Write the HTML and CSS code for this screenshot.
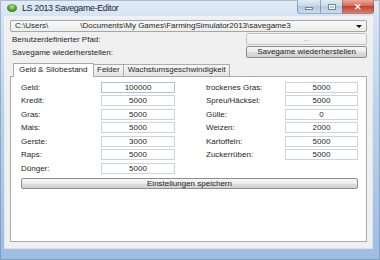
FILE: index.html
```html
<!DOCTYPE html>
<html lang="de">
<head>
  <meta charset="UTF-8" />
  <title>LS 2013 Savegame-Editor</title>
  <link rel="stylesheet" href="styles.css">
</head>
<body>
  <div class="window">
    <div class="titlebar">
      <span class="app-icon"></span>
      <span class="title">LS 2013 Savegame-Editor</span>
      <div class="caption-btns">
        <span class="cap cap-min"><i></i></span>
        <span class="cap cap-max"><i></i></span>
        <span class="cap cap-close">✕</span>
      </div>
    </div>
    <div class="client">
      <div class="combo">
        <span>C:\Users\</span><span class="blank"></span><span>\Documents\My Games\FarmingSimulator2013\savegame3</span>
        <span class="arrow"></span>
      </div>
      <div class="row">
        <label>Benutzerdefinierter Pfad:</label>
        <button class="btn" disabled>...</button>
      </div>
      <div class="row">
        <label>Savegame wiederherstellen:</label>
        <button class="btn">Savegame wiederherstellen</button>
      </div>
      <div class="tab-strip">
        <span class="tab active">Geld &amp; Silobestand</span>
        <span class="tab">Felder</span>
        <span class="tab">Wachstumsgeschwindigkeit</span>
      </div>
      <div class="tab-page">
        <div class="fields">
          <div class="col">
            <label>Geld:</label><input class="field focus" value="100000" readonly>
            <label>Kredit:</label><input class="field" value="5000" readonly>
            <label>Gras:</label><input class="field" value="5000" readonly>
            <label>Mais:</label><input class="field" value="5000" readonly>
            <label>Gerste:</label><input class="field" value="3000" readonly>
            <label>Raps:</label><input class="field" value="5000" readonly>
            <label>Dünger:</label><input class="field" value="5000" readonly>
          </div>
          <div class="col right">
            <label>trockenes Gras:</label><input class="field" value="5000" readonly>
            <label>Spreu/Häcksel:</label><input class="field" value="5000" readonly>
            <label>Gülle:</label><input class="field" value="0" readonly>
            <label>Weizen:</label><input class="field" value="2000" readonly>
            <label>Kartoffeln:</label><input class="field" value="5000" readonly>
            <label>Zuckerrüben:</label><input class="field" value="5000" readonly>
          </div>
        </div>
        <button class="btn btn-save">Einstellungen speichern</button>
      </div>
    </div>
  </div>
</body>
</html>
```

FILE: styles.css
```css
* { margin: 0; padding: 0; box-sizing: border-box; }
body {
  width: 380px;
  height: 260px;
  overflow: hidden;
  font-family: "Liberation Sans", Arial, sans-serif;
  font-size: 8px;
  color: #262626;
}
.window {
  width: 380px;
  height: 260px;
  display: flex;
  flex-direction: column;
  background: linear-gradient(to bottom, #e3ecf6 0, #d5e3f2 17px, #bcd2ea 110px, #9ebde1 100%);
  box-shadow: inset 0 0 0 1px rgba(70, 100, 140, 0.35);
}
.titlebar {
  height: 17px;
  display: flex;
  align-items: flex-start;
  flex-shrink: 0;
}
.app-icon {
  width: 10px;
  height: 8px;
  margin: 4px 0 0 7px;
  border-radius: 50%;
  background: radial-gradient(circle at 50% 35%, #b9e48a 0, #5aa830 45%, #2a5e18 85%);
}
.title {
  margin-left: 5px;
  line-height: 16px;
  font-size: 9px;
  letter-spacing: -0.4px;
  color: #1c2836;
}
.caption-btns {
  display: flex;
  margin-left: auto;
  margin-right: 6px;
  height: 14px;
}
.cap {
  height: 14px;
  display: flex;
  align-items: center;
  justify-content: center;
  border: 1px solid rgba(70, 95, 130, 0.45);
  border-top: none;
}
.cap-min {
  width: 23px;
  border-radius: 0 0 0 3px;
  border-right: none;
  background: linear-gradient(#e2ebf5, #cad9ea 45%, #b3c9e2 50%, #c9dbee);
}
.cap-max {
  width: 22px;
  border-right: none;
  background: linear-gradient(#e2ebf5, #cad9ea 45%, #b3c9e2 50%, #c9dbee);
}
.cap-min i {
  width: 8px;
  height: 3px;
  margin-top: 4px;
  background: #fff;
  border: 1px solid #6f86a3;
}
.cap-max i {
  width: 8px;
  height: 6px;
  border: 1px solid #6f86a3;
  box-shadow: inset 0 0 0 1px #fff;
}
.cap-close {
  width: 32px;
  border-radius: 0 0 3px 0;
  background: linear-gradient(#eaa99c, #d66a58 45%, #c6412f 50%, #dc7e66);
  color: #fff;
  font-size: 9px;
  font-weight: bold;
}
.client {
  flex: 1;
  margin: 0 8px 12px 5px;
  padding: 3px 5px 0 5px;
  background: #f0f0f0;
  box-shadow: 0 0 0 1px rgba(255, 255, 255, 0.55);
}
.combo {
  position: relative;
  height: 12px;
  display: flex;
  align-items: center;
  padding-left: 4px;
  white-space: nowrap;
  line-height: 10px;
  border: 1px solid #a6a6a6;
  border-radius: 2px;
  background: linear-gradient(#f8f8f8, #ededed);
}
.combo .blank {
  display: inline-block;
  width: 32px;
}
.arrow {
  position: absolute;
  right: 4px;
  top: 4px;
  border-left: 3px solid transparent;
  border-right: 3px solid transparent;
  border-top: 3px solid #111;
}
.row {
  display: flex;
  align-items: center;
  justify-content: space-between;
  height: 12px;
  margin-top: 1px;
}
.row label { margin-left: 2px; }
.btn {
  width: 121px;
  height: 12px;
  padding: 0;
  font: inherit;
  font-size: 8px;
  line-height: 10px;
  color: #222;
  border: 1px solid #8d8d8d;
  border-radius: 2px;
  background: linear-gradient(#f5f5f5, #ececec 50%, #dedede 50%, #d0d0d0);
}
.btn:disabled {
  color: #a0a0a0;
  border-color: #c2c2c2;
  background: linear-gradient(#f6f6f6, #eeeeee);
}
.tab-strip {
  position: relative;
  z-index: 1;
  display: flex;
  align-items: flex-end;
  height: 14px;
  margin: 5px 0 -1px 3px;
}
.tab {
  height: 12px;
  margin-bottom: 1px;
  margin-left: -1px;
  padding: 0 3.5px;
  line-height: 10px;
  border: 1px solid #ababab;
  border-bottom: none;
  background: linear-gradient(#f6f6f6, #e5e5e5);
}
.tab.active {
  height: 14px;
  margin: 0;
  padding: 0 5px;
  line-height: 12px;
  background: #fff;
}
.tab-page {
  height: 166px;
  padding: 5px 0 0 10px;
  background: #fff;
  border: 1px solid #ababab;
}
.fields {
  display: flex;
  gap: 31px;
}
.col {
  display: grid;
  grid-template-columns: 80px 74px;
  grid-auto-rows: 11px;
  row-gap: 2.45px;
  align-items: center;
}
.col.right { grid-template-columns: 79px 73px; }
.field {
  width: 100%;
  height: 11px;
  padding: 0;
  font: inherit;
  font-size: 8px;
  line-height: 9px;
  color: #262626;
  text-align: center;
  border: 1px solid #ced3da;
  background: #fff;
  outline: none;
}
.field.focus { border-color: #a9c3dc; }
.btn-save {
  display: block;
  width: 337px;
  height: 11px;
  margin-top: 4px;
  line-height: 9px;
}
```
